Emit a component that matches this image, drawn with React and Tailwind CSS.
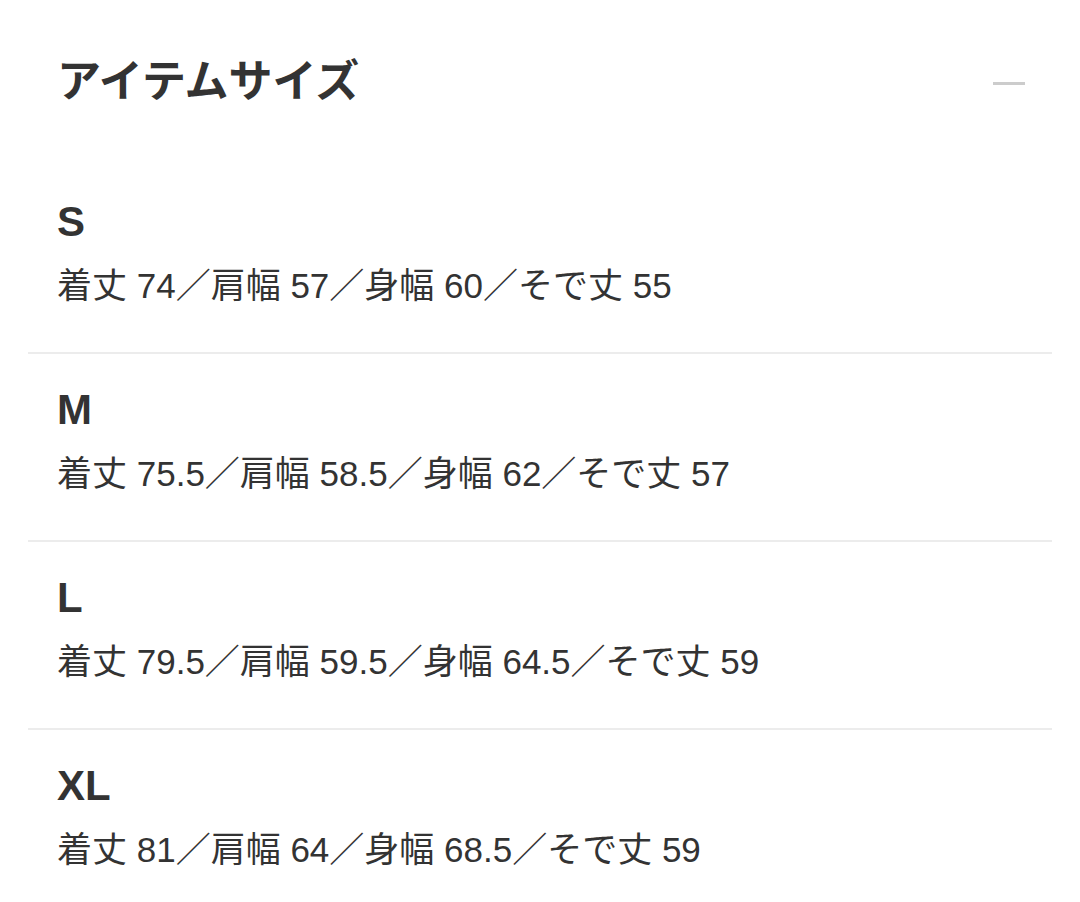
const sizes = [
  { name: 'S', spec: '着丈 74／肩幅 57／身幅 60／そで丈 55' },
  { name: 'M', spec: '着丈 75.5／肩幅 58.5／身幅 62／そで丈 57' },
  { name: 'L', spec: '着丈 79.5／肩幅 59.5／身幅 64.5／そで丈 59' },
  { name: 'XL', spec: '着丈 81／肩幅 64／身幅 68.5／そで丈 59' },
];

export default function App() {
  return (
    <div className="min-h-screen w-[1080px] bg-white px-[28px] text-[#333] font-['Liberation_Sans','Noto_Sans_CJK_JP',sans-serif]">
      {/* header */}
      <div className="flex items-center justify-between pl-[29px] pr-[27px] pt-[58px] pb-[60px]">
        <h2 className="text-[44px] leading-[48px] font-bold">アイテムサイズ</h2>
        <span className="mt-[3px] block h-[3px] w-[32px] bg-[#cccccc]" />
      </div>

      {sizes.map((s, i) => (
        <div
          key={s.name}
          className={
            i < sizes.length - 1
              ? 'border-b-2 border-[#ececec] pl-[29px] pt-[32px] pb-[42px]'
              : 'pl-[29px] pt-[32px] pb-[42px]'
          }
        >
          <div className="text-[42px] leading-[48px] font-bold">{s.name}</div>
          <div className="mt-[16px] text-[35px] leading-[48px]">{s.spec}</div>
        </div>
      ))}
    </div>
  );
}
